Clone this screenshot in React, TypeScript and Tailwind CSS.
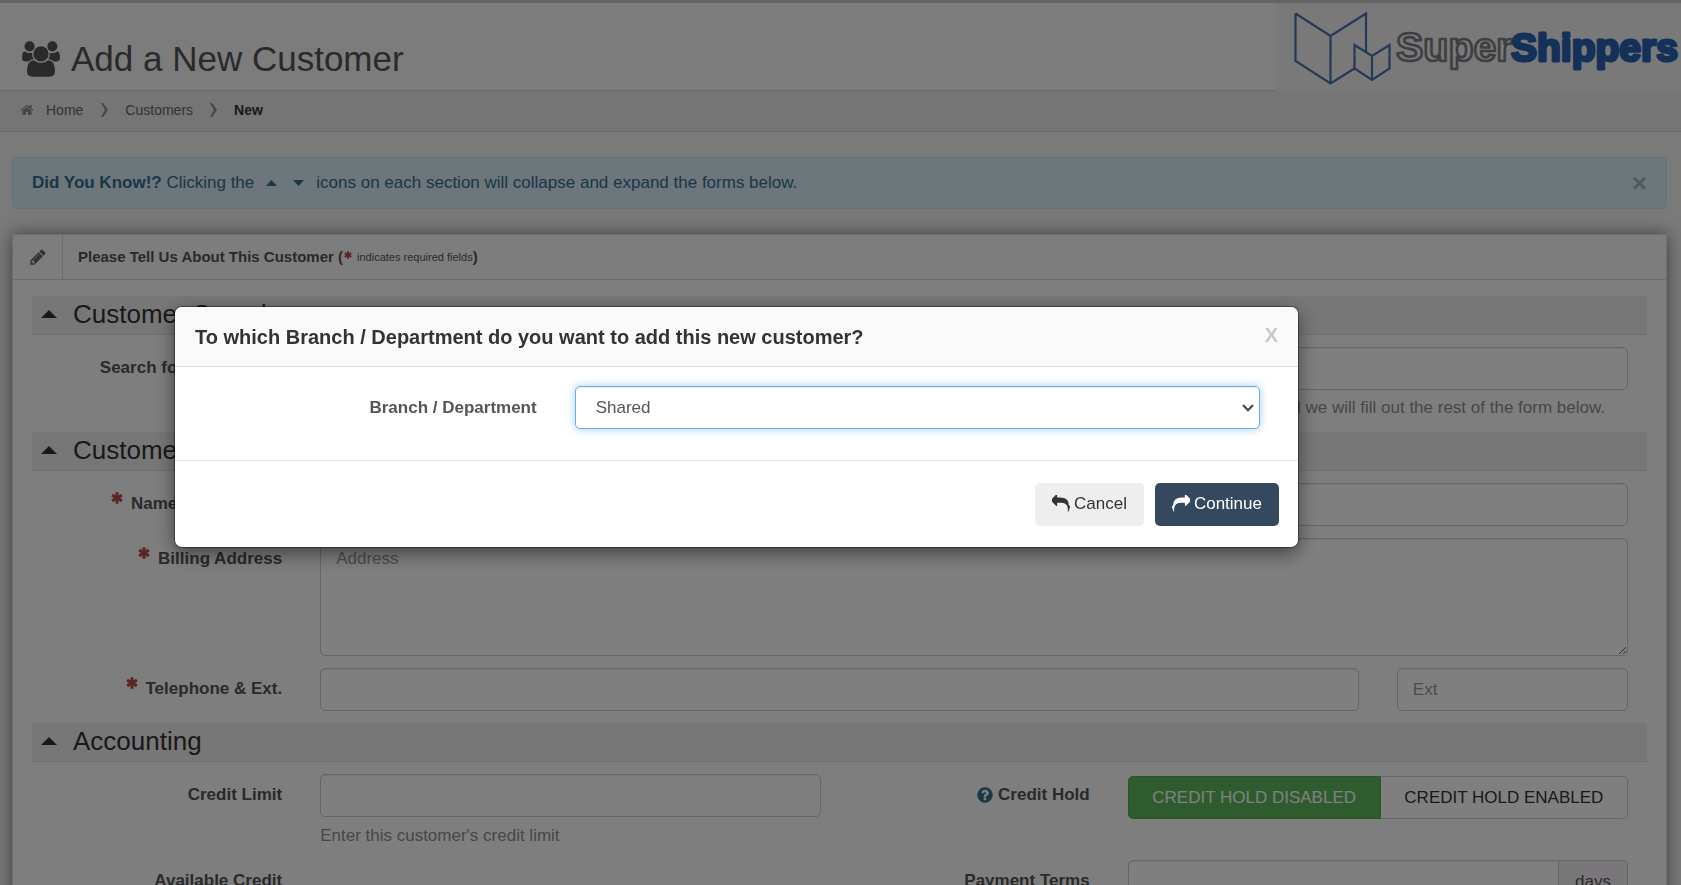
import type { ReactNode } from "react";

const PATHS = {
  users:
    "M593 896q-162 5-265 128h-134q-82 0-138-40.5t-56-118.5q0-353 124-353 6 0 43.5 21t97.5 42.5 119 21.5q67 0 133-23-5 37-5 66 0 139 81 256zm1071 637q0 120-73 189.5t-194 69.5h-874q-121 0-194-69.5t-73-189.5q0-53 3.5-103.5t14-109 26.5-108.5 43-97.5 62-81 85.5-53.5 111.5-20q10 0 43 21.5t73 48 107 48 135 21.5 135-21.5 107-48 73-48 43-21.5q61 0 111.5 20t85.5 53.5 62 81 43 97.5 26.5 108.5 14 109 3.5 103.5zm-1024-1277q0 106-75 181t-181 75-181-75-75-181 75-181 181-75 181 75 75 181zm704 384q0 159-112.5 271.5t-271.5 112.5-271.5-112.5-112.5-271.5 112.5-271.5 271.5-112.5 271.5 112.5 112.5 271.5zm576 225q0 78-56 118.5t-138 40.5h-134q-103-123-265-128 81-117 81-256 0-29-5-66 66 23 133 23 59 0 119-21.5t97.5-42.5 43.5-21q124 0 124 353zm-128-609q0 106-75 181t-181 75-181-75-75-181 75-181 181-75 181 75 75 181z",
  home: "M1472 992v480q0 26-19 45t-45 19h-384v-384h-256v384h-384q-26 0-45-19t-19-45v-480q0-1 .5-3t.5-3l575-474 575 474q1 2 1 6zm223-69l-62 74q-8 9-21 11h-3q-13 0-21-7l-692-577-692 577q-12 8-24 7-13-2-21-11l-62-74q-8-10-7-23.5t11-21.5l719-599q32-26 76-26t76 26l244 204v-195q0-14 9-23t23-9h192q14 0 23 9t9 23v408l219 182q10 8 11 21.5t-7 23.5z",
  pencil:
    "M491 1536l91-91-235-235-91 91v107h128v128h107zm523-928q0-22-22-22-10 0-17 7l-542 542q-7 7-7 17 0 22 22 22 10 0 17-7l542-542q7-7 7-17zm-54-192l416 416-832 832h-416v-416zm683 96q0 53-37 90l-166 166-416-416 166-165q36-38 90-38 53 0 91 38l235 234q37 39 37 91z",
  question:
    "M1024 1376v-192q0-14-9-23t-23-9h-192q-14 0-23 9t-9 23v192q0 14 9 23t23 9h192q14 0 23-9t9-23zm256-672q0-88-55.5-163t-138.5-116-170-41q-243 0-371 213-15 24 8 42l132 100q7 6 19 6 16 0 25-12 53-68 86-92 34-24 86-24 48 0 85.5 26t37.5 59q0 38-20 61t-68 45q-63 28-115.5 86.5t-52.5 125.5v36q0 14 9 23t23 9h192q14 0 23-9t9-23q0-19 21.5-49.5t54.5-49.5q32-18 49-28.5t46-35 44.5-48 28-60.5 12.5-81zm384 192q0 209-103 385.5t-279.5 279.5-385.5 103-385.5-103-279.5-279.5-103-385.5 103-385.5 279.5-279.5 385.5-103 385.5 103 279.5 279.5 103 385.5z",
  reply:
    "M1792 1120q0 166-127 451-3 7-10.5 24t-13.5 30-13 22q-12 17-28 17-15 0-23.5-10t-8.5-25q0-9 2.5-26.5t2.5-23.5q5-68 5-123 0-124-21.5-222t-59.5-169.5-98-123.5-126-85.5-156-52-179-24.5-203-7h-224v256q0 26-19 45t-45 19-45-19l-512-512q-19-19-19-45t19-45l512-512q19-19 45-19t45 19 19 45v256h224q713 0 875 403 53 134 53 333z",
};

function Icon({ name, className, width = 1792 }: { name: keyof typeof PATHS; className: string; width?: number }) {
  return (
    <svg viewBox={`0 0 ${width} 1792`} className={className} fill="currentColor" aria-hidden="true">
      <path d={PATHS[name]} />
    </svg>
  );
}

function Asterisk({ className }: { className: string }) {
  return (
    <svg viewBox="0 0 12 12" className={className} stroke="currentColor" strokeWidth="3" aria-hidden="true">
      <path d="M6 0.3V11.7M1.1 3.1L10.9 8.9M10.9 3.1L1.1 8.9" />
    </svg>
  );
}

function Caret({ down, className }: { down?: boolean; className: string }) {
  return (
    <svg viewBox="0 0 16 8" preserveAspectRatio="none" className={className} fill="currentColor" aria-hidden="true">
      <path d={down ? "M0 0H16L8 8Z" : "M0 8H16L8 0Z"} />
    </svg>
  );
}

function Separator() {
  return (
    <svg viewBox="0 0 7 14" className="h-3.5 w-[7px] text-[#8c8c8c]" fill="currentColor" aria-hidden="true">
      <path d="M0 0H2L7 7L2 14H0L4 7Z" />
    </svg>
  );
}

function Logo() {
  return (
    <svg viewBox="0 0 406 88" className="h-[88px] w-[406px] shrink-0 bg-[#f3f3f3]" role="img" aria-label="SuperShippers">
      <g fill="none" stroke="#4a72ae" strokeWidth="2.2" strokeLinejoin="miter">
        <path d="M20.5 10.5L55.5 33L91 10.5V49M20.5 10.5V58L55.5 80.5L79.5 65.5M55.5 33V80.5" />
        <path d="M79.5 42L97 53L114.5 42V65.5L97 77L79.5 65.5ZM97 53V77" />
      </g>
      <g fontFamily="Liberation Sans, Arial, sans-serif" fontWeight="700" strokeLinejoin="round">
        <text x="121" y="58" fontSize="41" fill="#f3f3f3" stroke="#7d7f84" strokeWidth="2.6">
          Super
        </text>
        <text x="236" y="58" fontSize="39" fill="#2862b4" stroke="#2862b4" strokeWidth="3">
          Shippers
        </text>
      </g>
    </svg>
  );
}

const control =
  "block h-[43px] w-full rounded-[5px] border border-[#ccc] bg-white px-[15px] text-[#555] shadow-[inset_0_1px_1px_rgba(0,0,0,0.075)] outline-none placeholder:text-[#999]";

function Section({ title, children }: { title: string; children: ReactNode }) {
  return (
    <section>
      <h2 className="mb-3 flex h-[39px] items-center border-b border-[#e2e2e2] bg-[#efefef] pb-[3px] pl-[9px] text-[26px] leading-none font-normal text-[#333]">
        <button type="button" aria-label={`Collapse ${title}`} className="mr-4 text-[#333]">
          <Caret className="h-2 w-4" />
        </button>
        {title}
      </h2>
      {children}
    </section>
  );
}

function Row({ children }: { children: ReactNode }) {
  return <div className="mb-3 grid grid-cols-12">{children}</div>;
}

function Label({ htmlFor, required, children }: { htmlFor: string; required?: boolean; children: ReactNode }) {
  return (
    <label htmlFor={htmlFor} className="col-span-2 flex justify-end px-[19px] pt-[9px] leading-6 font-bold whitespace-nowrap text-[#555]">
      {required && <Asterisk className="mr-2 size-3 text-[#b94a48]" />}
      {children}
    </label>
  );
}

export default function App() {
  return (
    <div className="h-screen overflow-hidden bg-[#f4f4f4] font-['Liberation_Sans',Arial,sans-serif] text-[17px] leading-6 text-[#555]">
      <header className="border-t-[3px] border-[#c8c8c8]">
        <div className="flex h-[88px] bg-[#f8f8f8]">
          <h1 className="flex grow items-center border-b border-[#d6d6d6] pt-6 pl-[22px] text-[35px] leading-none font-normal text-[#555]">
            <Icon name="users" width={1920} className="mr-[11px] h-9 w-[38px]" />
            Add a New Customer
          </h1>
          <Logo />
        </div>
        <nav aria-label="Breadcrumb" className="border-b border-[#d2d2d2] bg-[#eaeaea]">
          <ol className="flex h-10 items-center pb-0.5 pl-5 text-[14px] text-[#666]">
            <li className="flex items-center gap-3">
              <Icon name="home" className="size-3.5 text-[#8c8c8c]" />
              <a href="#home">Home</a>
            </li>
            <li className="ml-[18px] flex items-center gap-[17px]">
              <Separator />
              <a href="#customers">Customers</a>
            </li>
            <li className="ml-[17px] flex items-center gap-[17px] font-bold text-[#333]">
              <Separator />
              New
            </li>
          </ol>
        </nav>
      </header>

      <main className="pt-[25px] pr-[14px] pl-3">
        <div className="mb-[25px] flex h-[52px] items-center justify-between rounded-[5px] border border-[#bce8f1] bg-[#d9edf7] px-[19px] text-[#31708f]">
          <p className="flex items-center">
            <span>
              <strong>Did You Know!?</strong> Clicking the
            </span>
            <Caret className="mr-4 ml-3 h-1.5 w-[11px]" />
            <Caret down className="mr-3 h-1.5 w-[11px]" />
            icons on each section will collapse and expand the forms below.
          </p>
          <button type="button" aria-label="Dismiss" className="text-[26px] leading-none font-bold text-[#a4b3ba]">
            ×
          </button>
        </div>

        <div className="border border-[#ddd] bg-[#fdfdfd] shadow-[0_0_16px_rgba(0,0,0,0.5)]">
          <div className="flex h-[45px] items-center border-b border-[#d9d9d9] bg-[#fbfbfb] text-[15px] font-bold">
            <span className="flex h-full w-[50px] items-center justify-center border-r border-[#d9d9d9] text-[#666]">
              <Icon name="pencil" className="size-[18px]" />
            </span>
            <h2 className="flex items-center pl-[15px]">
              Please Tell Us About This Customer (
              <Asterisk className="mx-px mb-1 size-2 text-[#b94a48]" />
              <small className="ml-1 text-[11px] font-normal">indicates required fields</small>)
            </h2>
          </div>

          <form className="px-[19px] pt-4" onSubmit={(e) => e.preventDefault()}>
            <Section title="Customer Search">
              <Row>
                <Label htmlFor="search">Search for a Customer</Label>
                <div className="col-span-10 px-[19px]">
                  <input id="search" type="text" className={control} />
                  <p className="pt-1.5 text-right text-[#8f8f8f]">
                    <span className="pr-[23px]">If this customer is found we will fill out the rest of the form below.</span>
                  </p>
                </div>
              </Row>
            </Section>

            <Section title="Customer Information">
              <Row>
                <Label htmlFor="name" required>
                  Name of Customer
                </Label>
                <div className="col-span-10 px-[19px]">
                  <input id="name" type="text" className={control} />
                </div>
              </Row>
              <Row>
                <Label htmlFor="address" required>
                  Billing Address
                </Label>
                <div className="col-span-10 px-[19px]">
                  <textarea
                    id="address"
                    placeholder="Address"
                    className="block h-[118px] w-full resize rounded-[5px] border border-[#ccc] bg-white px-[15px] py-2 text-[#555] shadow-[inset_0_1px_1px_rgba(0,0,0,0.075)] outline-none placeholder:text-[#999]"
                  />
                </div>
              </Row>
              <Row>
                <Label htmlFor="telephone" required>
                  Telephone &amp; Ext.
                </Label>
                <div className="col-span-8 px-[19px]">
                  <input id="telephone" type="tel" className={control} />
                </div>
                <div className="col-span-2 px-[19px]">
                  <input id="ext" type="text" aria-label="Extension" placeholder="Ext" className={control} />
                </div>
              </Row>
            </Section>

            <Section title="Accounting">
              <Row>
                <Label htmlFor="credit-limit">Credit Limit</Label>
                <div className="col-span-4 px-[19px]">
                  <input id="credit-limit" type="text" className={control} />
                  <p className="pt-[7px] text-[#8f8f8f]">Enter this customer's credit limit</p>
                </div>
                <Label htmlFor="credit-hold">
                  <Icon name="question" className="mt-[3px] mr-1 size-[18px] text-[#31708f]" />
                  Credit Hold
                </Label>
                <div className="col-span-4 px-[19px] pt-0.5">
                  <div className="flex h-[43px]">
                    <button id="credit-hold" type="button" className="grow rounded-l-[5px] border border-[#4cae4c] bg-[#5cb85c] text-white">
                      CREDIT HOLD DISABLED
                    </button>
                    <button type="button" className="grow rounded-r-[5px] border border-l-0 border-[#ccc] bg-white text-[#333]">
                      CREDIT HOLD ENABLED
                    </button>
                  </div>
                </div>
              </Row>
              <Row>
                <Label htmlFor="available-credit">Available Credit</Label>
                <output id="available-credit" className="col-span-4 px-[19px]" />
                <Label htmlFor="terms">Payment Terms</Label>
                <div className="col-span-4 flex px-[19px]">
                  <input
                    id="terms"
                    type="text"
                    className="block h-[43px] min-w-0 grow rounded-l-[5px] border border-[#ccc] bg-white px-[15px] shadow-[inset_0_1px_1px_rgba(0,0,0,0.075)] outline-none"
                  />
                  <span className="flex w-[69px] items-center justify-center rounded-r-[5px] border border-l-0 border-[#ccc] bg-[#f3eef3]">
                    days
                  </span>
                </div>
              </Row>
            </Section>
          </form>
        </div>
      </main>

      <div className="fixed inset-0 overflow-hidden bg-black/50 pt-[307px] pl-[175px]">
        <div
          role="dialog"
          aria-modal="true"
          aria-labelledby="dialog-title"
          className="w-full max-w-[1123px] overflow-hidden rounded-[7px] bg-white shadow-[0_6px_19px_rgba(0,0,0,0.5),0_0_1px_1px_rgba(0,0,0,0.4)]"
        >
          <div className="flex h-[60px] items-center justify-between border-b border-[#ddd] bg-[#fafafa] px-5">
            <h3 id="dialog-title" className="text-[20px] font-bold text-[#333]">
              To which Branch / Department do you want to add this new customer?
            </h3>
            <button type="button" aria-label="Close" className="pb-1 text-[20px] font-bold text-[#c8c8c8]">
              X
            </button>
          </div>
          <div className="grid h-[94px] grid-cols-3 border-b border-[#e5e5e5] px-[19px] pt-[19px]">
            <label htmlFor="branch" className="px-[19px] pt-2.5 text-right font-bold">
              Branch / Department
            </label>
            <div className="relative col-span-2 px-[19px]">
              <select
                id="branch"
                className="block h-[43px] w-full appearance-none rounded-[5px] border border-[#66afe9] bg-white px-5 text-[#555] shadow-[inset_0_1px_1px_rgba(0,0,0,0.075),0_0_10px_rgba(102,175,233,0.6)] outline-none"
              >
                <option>Shared</option>
              </select>
              <svg
                viewBox="0 0 12 8"
                className="pointer-events-none absolute top-[18px] right-[25px] h-2 w-3 text-[#444]"
                fill="none"
                stroke="currentColor"
                strokeWidth="2"
                aria-hidden="true"
              >
                <path d="M1 1L6 6.3L11 1" />
              </svg>
            </div>
          </div>
          <div className="flex h-[86px] items-center justify-end gap-[11px] px-[19px]">
            <button type="button" className="flex h-[43px] items-center gap-1 rounded-[5px] bg-[#eee] px-[17px] text-[#333]">
              <Icon name="reply" className="size-[18px]" />
              Cancel
            </button>
            <button type="button" className="flex h-[43px] items-center gap-1 rounded-[5px] bg-[#34495e] px-[17px] text-white">
              <Icon name="reply" className="size-[18px] -scale-x-100" />
              Continue
            </button>
          </div>
        </div>
      </div>
    </div>
  );
}
